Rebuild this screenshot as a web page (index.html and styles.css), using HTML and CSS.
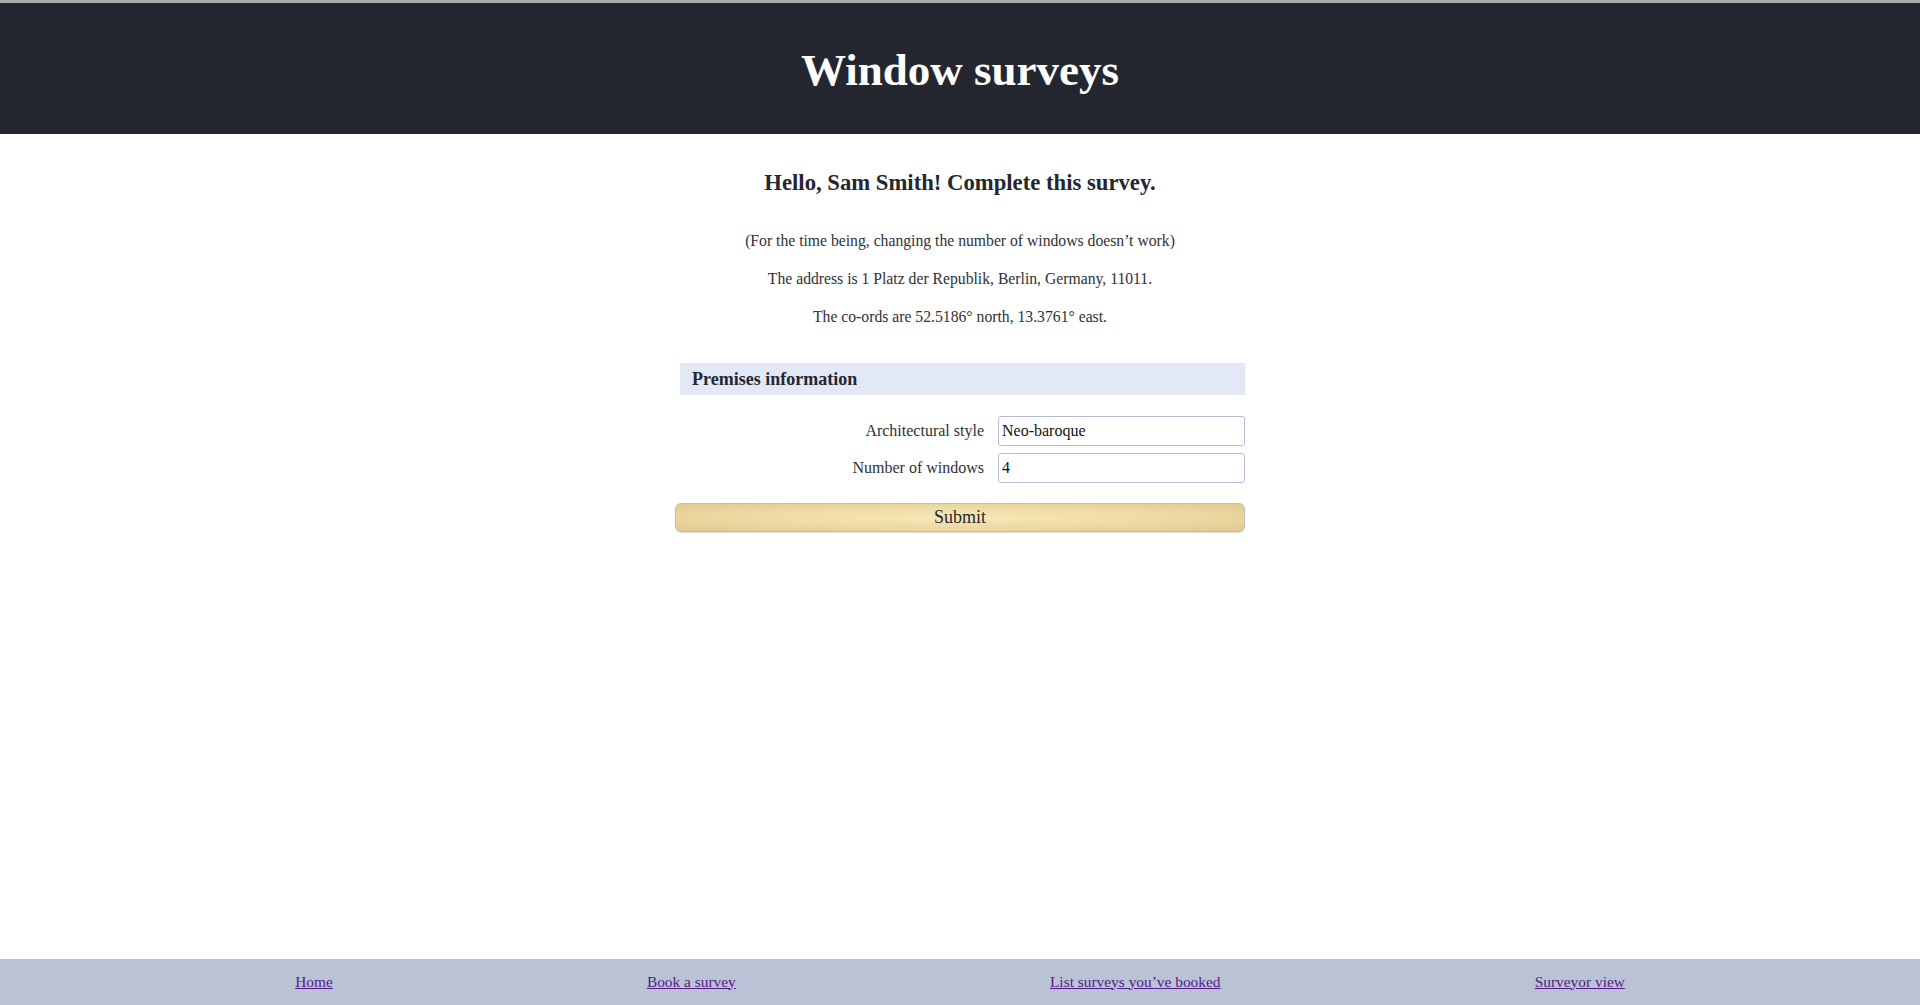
FILE: index.html
```html
<!DOCTYPE html>
<html lang="en">
<head>
<meta charset="utf-8">
<title>Window surveys</title>
<link rel="stylesheet" href="styles.css">
</head>
<body>
<header class="site-header">
  <h1 class="site-title">Window surveys</h1>
</header>
<main class="content">
  <h2 class="greeting">Hello, Sam Smith! Complete this survey.</h2>
  <p class="note">(For the time being, changing the number of windows doesn’t work)</p>
  <p class="note">The address is 1 Platz der Republik, Berlin, Germany, 11011.</p>
  <p class="note">The co-ords are 52.5186° north, 13.3761° east.</p>
  <form class="survey-form">
    <h3 class="section-title">Premises information</h3>
    <div class="fields">
      <label class="field-label" for="style">Architectural style</label>
      <input class="field-input" id="style" type="text" value="Neo-baroque">
      <label class="field-label" for="windows">Number of windows</label>
      <input class="field-input" id="windows" type="text" value="4">
    </div>
    <button class="submit-btn" type="button">Submit</button>
  </form>
</main>
<footer class="site-footer">
  <ul class="footer-links">
    <li><a class="footer-link" href="#">Home</a></li>
    <li><a class="footer-link" href="#">Book a survey</a></li>
    <li><a class="footer-link" href="#">List surveys you’ve booked</a></li>
    <li><a class="footer-link" href="#">Surveyor view</a></li>
  </ul>
</footer>
</body>
</html>
```
FILE: styles.css
```css
* { box-sizing: border-box; }
html, body { height: 100%; }
body {
  margin: 0;
  border-top: 3px solid #ababab;
  display: flex;
  flex-direction: column;
  min-height: 100vh;
  font-family: "Liberation Serif", "DejaVu Serif", serif;
  color: #24272f;
  background: #fff;
}
.site-header {
  background: #24272f;
  height: 131px;
  display: flex;
  align-items: center;
  justify-content: center;
}
.site-title {
  margin: 0;
  color: #fff;
  font-size: 45px;
  font-weight: bold;
  line-height: 1;
  padding-top: 3px;
}
.content {
  width: 570px;
  margin: 0 auto;
  text-align: center;
}
.greeting {
  margin: 36px 0 35px;
  font-size: 22.7px;
  line-height: 26px;
  font-weight: bold;
  color: #24272f;
}
.note {
  margin: 0 0 18px;
  font-size: 15.7px;
  line-height: 20px;
  color: #2f3138;
}
.survey-form {
  margin-top: 36px;
  text-align: left;
}
.section-title {
  margin: 0 0 0 5px;
  height: 32px;
  padding: 0 12px;
  background: #e3e8f7;
  font-size: 18px;
  line-height: 33px;
  font-weight: bold;
  color: #24272f;
}
.fields {
  display: grid;
  grid-template-columns: 1fr 247px;
  column-gap: 14px;
  row-gap: 7px;
  align-items: center;
  margin-top: 21px;
}
.field-label {
  text-align: right;
  font-size: 16px;
  color: #2f3138;
}
.field-input {
  height: 30px;
  border: 1px solid #b4bbd4;
  border-radius: 3px;
  padding: 0 3px;
  font-family: "Liberation Serif", "DejaVu Serif", serif;
  font-size: 16px;
  color: #111;
  background: #fff;
}
.submit-btn {
  display: block;
  width: 100%;
  height: 29px;
  margin-top: 20px;
  border: 1px solid #c4bfb2;
  border-radius: 6px;
  background: radial-gradient(ellipse at center, #f8e8b8 0%, #efdca6 45%, #e2ca8f 100%);
  box-shadow: 0 1px 1px rgba(0,0,0,0.15);
  font-family: "Liberation Serif", "DejaVu Serif", serif;
  font-size: 18px;
  line-height: 27px;
  color: #24272f;
  padding: 0;
}
.site-footer {
  margin-top: auto;
  height: 46px;
  background: #bac3d6;
  display: flex;
  align-items: center;
}
.footer-links {
  list-style: none;
  margin: 0 -19px;
  padding: 0;
  flex: 1;
  display: flex;
  justify-content: space-evenly;
  padding-bottom: 1px;
}
.footer-link {
  color: #551a8b;
  font-size: 15.4px;
}
```
